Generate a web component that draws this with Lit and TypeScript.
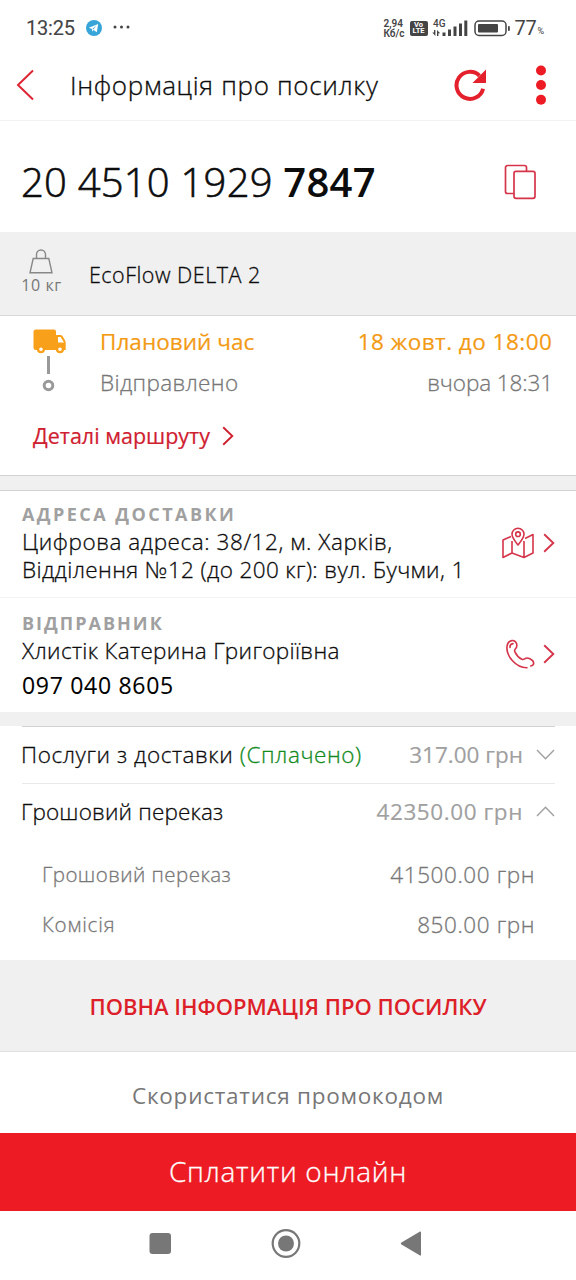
import { LitElement, html, css } from "lit";
import { customElement } from "lit/decorators.js";

const chevron = (d: string, w: number, h: number, sw: number) => html`
  <svg width=${w} height=${h} viewBox="0 0 ${w} ${h}">
    <path d=${d} fill="none" stroke="currentColor" stroke-width=${sw} />
  </svg>`;
const next = () => chevron("M1.200 1.200 10.300 10 1.200 18.800", 12, 20, 1.9);

const base = css`
  :host { display: block; box-sizing: border-box; font-family: "Open Sans", "Noto Sans", sans-serif; font-weight: 300; color: #0c0c0c; font-size: 22.5px; white-space: nowrap; -webkit-text-stroke: 0.3px currentColor; }
  * { box-sizing: border-box; }
  svg { display: block; flex: none; }
`;

@customElement("status-bar")
class StatusBar extends LitElement {
  static styles = [base, css`
    :host { display: flex; align-items: center; height: 56px; padding: 0 32px 0 26px; color: #444; font-family: Roboto, sans-serif; font-weight: 400; -webkit-text-stroke: 0; }
    .time { font-size: 20px; letter-spacing: -0.2px; width: 60px; -webkit-text-stroke: 0.1px currentColor; }
    .dots { margin: -2px 0 0 10px; }
    .speed { margin-left: auto; font-size: 10px; line-height: 10px; font-weight: 600; width: 26px; padding-top: 1px; }
    .speed div { height: 10px; }
    .volte { width: 18px; height: 15px; border-radius: 2px; background: #444; color: #fff; font-size: 7.5px; line-height: 6.5px; font-weight: 700; text-align: center; padding-top: 1px; }
    .signal { margin-left: 4px; }
    .battery { margin-left: 6px; }
    .pct { font-size: 20px; margin-left: 4px; letter-spacing: -0.3px; }
    .sign { font-size: 9px; margin: 6px 0 0 1px; }
  `];
  render() {
    return html`
      <span class="time">13:25</span>
      <svg width="16" height="16" viewBox="0 0 16 16">
        <circle cx="8" cy="8" r="8" fill="#37a5d8" />
        <path d="M2.800 7.800 12.200 4 10.800 12.200 7.600 10 6.200 11.400 6 8.900z" fill="#fff" />
        <path d="M6.300 9 10.400 5.600 7.200 9.600z" fill="#37a5d8" />
      </svg>
      <svg class="dots" width="18" height="4" viewBox="0 0 18 4" fill="#444">
        <circle cx="3" cy="2" r="1.500" /><circle cx="9.500" cy="2" r="1.500" /><circle cx="16" cy="2" r="1.500" />
      </svg>
      <div class="speed"><div>2,94</div><div>Кб/с</div></div>
      <div class="volte">Vo<br />LTE</div>
      <svg class="signal" width="36" height="18" viewBox="0 0 36 18" fill="#444">
        <text x="1" y="8" font-size="10" font-weight="500">4G</text>
        <path d="M2 11h1.400v6L.3 13.600H2zM5 17v-6l3.200 3.200H6.400V17z" />
        <path d="M10.500 13.500h3V17h-3zM16 10.500h3V17h-3zM21.500 7.500h3V17h-3zM27 4.500h3V17h-3zM32.300 1.500h3V17h-3z" />
      </svg>
      <svg class="battery" width="37" height="17" viewBox="0 0 37 17">
        <rect x="1" y="1" width="31" height="14.500" rx="4" fill="none" stroke="#444" stroke-width="1.500" />
        <rect x="4" y="4" width="20" height="8.500" rx="1" fill="#444" />
        <rect x="34" y="6" width="1.800" height="5" rx=".8" fill="#444" />
      </svg>
      <span class="pct">77</span><span class="sign">%</span>`;
  }
}

@customElement("app-header")
class AppHeader extends LitElement {
  static styles = [base, css`
    :host { display: flex; align-items: center; height: 65px; padding: 0 29px 6px 16px; border-bottom: 1px solid #f2f2f2; }
    .title { flex: 1; font-size: 26px; margin: 0 0 0 36px; line-height: 34px; letter-spacing: 0.67px; }
    .more { margin-left: 47px; }
  `];
  render() {
    return html`
      <svg width="18" height="32" viewBox="0 0 18 32"><path d="M17 1.500 2 16 17 30.500" fill="none" stroke="#dd2534" stroke-width="2" /></svg>
      <span class="title">Інформація про посилку</span>
      <svg width="34" height="34" viewBox="0 0 34 34">
        <path d="M30.100 20.700A13.500 13.500 0 1 1 26.500 7.700" fill="none" stroke="#e3202c" stroke-width="4" transform="translate(-1 0)" />
        <path d="M32 1.500V15H18.500z" fill="#e3202c" />
      </svg>
      <svg class="more" width="12" height="42" viewBox="0 0 12 42" fill="#ed1c24">
        <circle cx="6" cy="6.500" r="5" /><circle cx="6" cy="21" r="5" /><circle cx="6" cy="35.700" r="5" />
      </svg>`;
  }
}

@customElement("parcel-head")
class ParcelHead extends LitElement {
  static styles = [base, css`
    .number { display: flex; align-items: center; justify-content: space-between; height: 111px; padding: 11px 39px 0 21px; font-size: 40px; line-height: 54px; letter-spacing: 0.22px; -webkit-text-stroke-width: 0.6px; }
    b { font-weight: 600; -webkit-text-stroke-width: 0; }
    .cargo { display: flex; align-items: center; height: 84px; background: #f0f0f0; border-bottom: 1px solid #d8d8d8; padding-left: 21px; }
    .weight { display: flex; flex-direction: column; align-items: center; width: 41px; color: #777; font-size: 16px; line-height: 20px; font-weight: 400; letter-spacing: 0.6px; margin-top: -3px; gap: 1px; -webkit-text-stroke-width: 0; }
    .weight svg { margin-right: 2px; }
    .name { font-size: 21.5px; margin: 2px 0 0 27px; letter-spacing: 0.5px; }
  `];
  render() {
    return html`
      <div class="number">
        <span>20 4510 1929 <b>7847</b></span>
        <svg width="33" height="36" viewBox="0 0 33 36" fill="none" stroke="#d5354b" stroke-width="1.700">
          <path d="M10 29.500H3.500a2 2 0 0 1-2-2v-24a2 2 0 0 1 2-2h17a2 2 0 0 1 2 2V7" />
          <rect x="10" y="7.300" width="21" height="27" rx="2" />
        </svg>
      </div>
      <div class="cargo">
        <div class="weight">
          <svg width="24" height="25" viewBox="0 0 24 25" fill="none" stroke="#888" stroke-width="1.400">
            <path d="M4.200 9.500h15.600L23 23.800H1zM7.500 9.500V5.500a4.500 4.500 0 0 1 9 0v4" />
          </svg>
          <span>10 кг</span>
        </div>
        <span class="name">EcoFlow DELTA 2</span>
      </div>`;
  }
}

@customElement("route-card")
class RouteCard extends LitElement {
  static styles = [base, css`
    :host { display: grid; grid-template-columns: 67px 1fr auto; grid-template-rows: 41px 41px 1fr; height: 160px; padding: 5px 24px 0 33px; border-bottom: 1px solid #d2d2d2; line-height: 41px; align-items: center; }
    .track { grid-row: 1 / 3; align-self: start; margin-top: 7px; }
    .plan { color: #f39a15; font-weight: 500; -webkit-text-stroke-width: 0.2px; }
    .sent { color: #777; }
    .link { grid-column: 1 / 4; display: flex; align-items: center; gap: 12px; color: #cf2030; font-weight: 500; font-size: 21.5px; height: 65px; line-height: 65px; align-self: start; -webkit-text-stroke-width: 0.2px; }
    .right { text-align: right; }
    .p1 { letter-spacing: 0.04px; }
    .p2 { letter-spacing: 0.48px; margin-right: -0.4px; }
    .s1 { letter-spacing: 0.35px; }
    .s2 { letter-spacing: -0.1px; margin-right: -1px; }
  `];
  render() {
    return html`
      <svg class="track" width="36" height="65" viewBox="0 0 36 65">
        <path d="M3 1.500h18a2 2 0 0 1 2 2V7h4.500q1 0 2 1l2.600 4.500q.6 1 .6 2.500v7h-2a4 4 0 0 1-7.600 0H11.800a4 4 0 0 1-7.600 0H3q-2.500 0-2.500-2.500V4q0-2.500 2.500-2.500z" fill="#f9a01b" />
        <path d="M25 9v5.500h6L27.600 9z" fill="#fff" />
        <circle cx="8" cy="21.300" r="2.900" fill="#fff" stroke="#f9a01b" stroke-width="2.200" />
        <circle cx="27" cy="21.300" r="2.900" fill="#fff" stroke="#f9a01b" stroke-width="2.200" />
        <path d="M15.500 28v18" stroke="#999" stroke-width="3" />
        <circle cx="15.500" cy="57.500" r="4.300" fill="none" stroke="#999" stroke-width="3" />
      </svg>
      <span class="plan p1">Плановий час</span><span class="plan right p2">18 жовт. до 18:00</span>
      <span class="sent s1">Відправлено</span><span class="sent right s2">вчора 18:31</span>
      <div class="link"><span>Деталі маршруту</span>${next()}</div>`;
  }
}

@customElement("contact-card")
class ContactCard extends LitElement {
  static styles = [base, css`
    .row { display: flex; align-items: center; justify-content: space-between; padding: 0 21px 0 22px; }
    .address { height: 108px; border-top: 1px solid #d2d2d2; border-bottom: 1px solid #f2f2f2; padding-bottom: 3px; }
    .sender { height: 114px; }
    .label { font-size: 18px; font-weight: 700; color: #a0a0a0; letter-spacing: 2.45px; line-height: 25px; -webkit-text-stroke-width: 0; }
    .s { letter-spacing: 2px; line-height: 26px; }
    .line { line-height: 28px; }
    .sender .line { padding-top: 1px; }
    .address .a1 { padding-top: 1px; }
    .a1 { letter-spacing: 0.56px; }
    .a2 { letter-spacing: 0.37px; }
    .n1 { letter-spacing: 0.34px; }
    .phone { font-size: 23px; font-weight: 500; line-height: 40px; height: 36px; letter-spacing: 0.7px; color: #000; -webkit-text-stroke-width: 0.1px; }
    .icons { display: flex; align-items: center; gap: 8px; color: #d5354b; }
    .sender .icons { padding-bottom: 2px; }
  `];
  render() {
    return html`
      <div class="row address">
        <div>
          <div class="label">АДРЕСА ДОСТАВКИ</div>
          <div class="line a1">Цифрова адреса: 38/12, м. Харків,</div>
          <div class="line a2">Відділення №12 (до 200 кг): вул. Бучми, 1</div>
        </div>
        <div class="icons">
          <svg width="34" height="32" viewBox="0 0 34 32" fill="none" stroke="currentColor" stroke-width="1.600" stroke-linejoin="round">
            <path d="M10 9.500 2 13V30.500l9-4.500 12 4.500 9-4.500V7.500l-8 4M11 14v12M23 14v16.500" />
            <path d="M17 18C13.500 13.500 11 10.500 11 7.200a6 6 0 0 1 12 0C23 10.500 20.500 13.500 17 18z" />
            <circle cx="17" cy="7.200" r="2.300" />
          </svg>
          ${next()}
        </div>
      </div>
      <div class="row sender">
        <div>
          <div class="label s">ВІДПРАВНИК</div>
          <div class="line n1">Хлистік Катерина Григоріївна</div>
          <div class="phone">097 040 8605</div>
        </div>
        <div class="icons">
          <svg width="30" height="30" viewBox="0 0 30 30" fill="none" stroke="currentColor" stroke-width="1.600" stroke-linecap="round" stroke-linejoin="round">
            <path d="M22 28.800C11 29 1 17 2 7.500 2.300 4.500 4.500 2 6.800 1.600c2.500-.4 4 1 4.700 3 .8 2.300.6 3.700-1.200 5.400-.8.800-.9 1.700-.4 2.800 1.400 3 4 6 6.900 7.500 1.200.6 2 .2 2.800-.4 1.500-1.200 3.200-1.300 5.300-.2 2.300 1.200 3.800 2.400 3.800 4.300 0 1.600-1.500 2.800-3 3M5 8.500C4.800 6.500 6 4.800 8 4.600" />
          </svg>
          ${next()}
        </div>
      </div>`;
  }
}

@customElement("cost-list")
class CostList extends LitElement {
  static styles = [base, css`
    :host { padding: 0 21px 0 22px; height: 234px; }
    .row { display: flex; align-items: center; justify-content: space-between; height: 57px; border-top: 1px solid #e9e9e9; padding-bottom: 2px; }
    .first { border-color: #d2d2d2; }
    .paid { color: #128a1c; }
    .sum { display: flex; align-items: center; gap: 13px; color: #a0a0a0; font-weight: 400; -webkit-text-stroke-width: 0.15px; }
    .sub { display: flex; align-items: center; justify-content: space-between; height: 50px; padding: 0 20px; color: #777; }
    .sub:nth-child(3) { margin-top: 8px; }
    .k { font-size: 20.5px; padding-top: 2px; }
    .c1 { letter-spacing: 0.57px; margin-left: -1px; }
    .c2 { letter-spacing: 0.16px; margin-left: -1px; }
    .v1 { letter-spacing: 0; }
    .v2, .v3, .v4 { letter-spacing: 0.58px; }
    .v3, .v4 { padding-top: 2px; }
    .k1 { letter-spacing: 0.45px; }
    .k2 { letter-spacing: 0.85px; }
  `];
  render() {
    return html`
      <div class="row first"><span class="c1">Послуги з доставки <span class="paid">(Сплачено)</span></span>
        <span class="sum"><span class="v1">317.00 грн</span>${chevron("M1 1 9.500 9.800 18 1", 19, 11, 1.4)}</span></div>
      <div class="row"><span class="c2">Грошовий переказ</span>
        <span class="sum"><span class="v2">42350.00 грн</span>${chevron("M1 10 9.500 1.200 18 10", 19, 11, 1.4)}</span></div>
      <div class="sub"><span class="k k1">Грошовий переказ</span><span class="v3">41500.00 грн</span></div>
      <div class="sub"><span class="k k2">Комісія</span><span class="v4">850.00 грн</span></div>`;
  }
}

@customElement("app-root")
class AppRoot extends LitElement {
  static styles = [base, css`
    :host { width: 576px; height: 1280px; background: #fff; overflow: hidden; }
    .gap { height: 14px; background: #f0f0f0; }
    .btn { display: flex; align-items: center; justify-content: center; }
    .full { height: 92px; background: #f0f0f0; border-bottom: 1px solid #e0e0e0; color: #dd1f2a; font-size: 22px; font-weight: 600; -webkit-text-stroke-width: 0; }
    .promo { height: 81px; padding-top: 6px; color: #777; font-weight: 400; letter-spacing: 0.75px; -webkit-text-stroke-width: 0; }
    .pay { height: 78px; background: #ed1c24; color: #fff; font-size: 28px; letter-spacing: 0.68px; padding-bottom: 2px; }
  `];
  render() {
    return html`
      <status-bar></status-bar>
      <app-header></app-header>
      <parcel-head></parcel-head>
      <route-card></route-card>
      <div class="gap"></div>
      <contact-card></contact-card>
      <div class="gap"></div>
      <cost-list></cost-list>
      <div class="btn full"><span>ПОВНА ІНФОРМАЦІЯ ПРО ПОСИЛКУ</span></div>
      <div class="btn promo"><span>Скористатися промокодом</span></div>
      <div class="btn pay"><span>Сплатити онлайн</span></div>
      <svg width="576" height="69" viewBox="0 0 576 69" fill="#777">
        <rect x="149.500" y="22" width="21.500" height="21" rx="3" />
        <circle cx="286" cy="32.500" r="13.300" fill="none" stroke="#777" stroke-width="2.200" /><circle cx="286" cy="32.500" r="8" />
        <path d="M401.500 31.500 420 20.500q1-.5 1 1v22q0 1.500-1 1L401.500 33.500q-1.500-1 0-2z" />
      </svg>`;
  }
}
